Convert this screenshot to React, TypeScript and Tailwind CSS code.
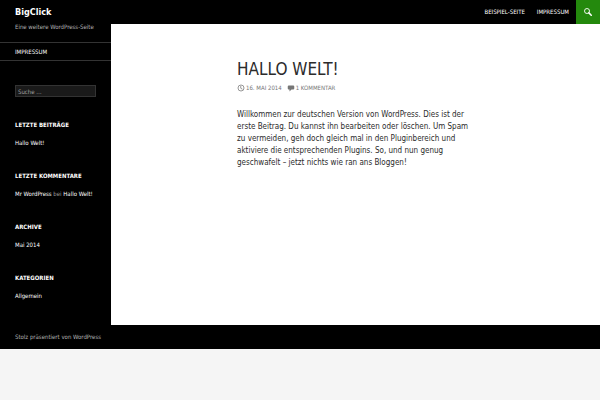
import React, { useState } from 'react'

interface Widget {
    title: string
    content: React.ReactNode
}

const widgets: Widget[] = [
    { title: 'Letzte Beiträge', content: <a href="#welt">Hallo Welt!</a> },
    {
        title: 'Letzte Kommentare',
        content: (
            <>
                <a href="#mr">Mr WordPress</a>
                <span className="text-[#9a9a9a]"> bei </span>
                <a href="#welt">Hallo Welt!</a>
            </>
        ),
    },
    { title: 'Archive', content: <a href="#archive">Mai 2014</a> },
    { title: 'Kategorien', content: <a href="#allgemein">Allgemein</a> },
]

const SearchIcon: React.FC = () => (
    <svg viewBox="0 0 16 16" className="size-2" fill="none" stroke="white">
        <circle cx="6" cy="6" r="5" strokeWidth="1.8" />
        <path d="M9.8 9.8 L14.5 14.5" strokeWidth="3" strokeLinecap="round" />
    </svg>
)

const ClockIcon: React.FC = () => (
    <svg viewBox="0 0 16 16" className="size-2" fill="none" stroke="#767676">
        <circle cx="8" cy="8" r="6" strokeWidth="1.5" />
        <path d="M7.5 4 V8.5 L11 10.5" strokeWidth="1.5" />
    </svg>
)

const CommentIcon: React.FC = () => (
    <svg viewBox="0 0 16 16" className="size-2" fill="#767676">
        <path d="M3.5 3 H12.5 Q14.5 3 14.5 5 V9 Q14.5 11 12.5 11 H9 L5 15 V11 H3.5 Q1.5 11 1.5 9 V5 Q1.5 3 3.5 3 Z" />
    </svg>
)

const App: React.FC = () => {
    const [search, setSearch] = useState('')

    return (
        <div className="min-h-screen bg-[#f5f5f5] font-['DejaVu_Sans_Condensed','DejaVu_Sans',sans-serif] text-[6px] leading-[9px] antialiased">
            <div className="flex bg-black text-white">
                <aside className="w-[111px] shrink-0 pb-px">
                    <div className="px-[15px] pb-[11px]">
                        <h1 className="text-[9px] leading-6 font-bold">
                            <a href="#home">BigClick</a>
                        </h1>
                        <p className="-mt-0.5 whitespace-nowrap text-[#b3b3b3]">
                            Eine weitere WordPress-Seite
                        </p>
                    </div>
                    <nav className="border-y border-[#333333] px-[15px] leading-[17px] uppercase">
                        <a href="#impressum">Impressum</a>
                    </nav>
                    <form
                        className="mt-6 mb-[23px] px-[15px]"
                        onSubmit={(e) => e.preventDefault()}
                    >
                        <input
                            type="search"
                            aria-label="Suche"
                            placeholder="Suche …"
                            value={search}
                            onChange={(e) => setSearch(e.target.value)}
                            className="block h-3 w-full border border-[#333333] bg-[#1a1a1a] px-0.5 text-white placeholder:text-[#a0a0a0]"
                        />
                    </form>
                    {widgets.map((widget) => (
                        <section key={widget.title} className="mb-6 px-[15px]">
                            <h2 className="mb-[9px] font-bold uppercase">
                                {widget.title}
                            </h2>
                            <p className="whitespace-nowrap">
                                {widget.content}
                            </p>
                        </section>
                    ))}
                </aside>
                <div className="flex min-w-0 flex-1 flex-col">
                    <header className="flex h-6 justify-end leading-[23px] uppercase">
                        <nav className="flex gap-3 pr-[7px]">
                            <a href="#beispiel">Beispiel-Seite</a>
                            <a href="#impressum">Impressum</a>
                        </nav>
                        <button
                            type="button"
                            aria-label="Suche"
                            className="flex size-6 items-center justify-center bg-[#24890d]"
                        >
                            <SearchIcon />
                        </button>
                    </header>
                    <main className="flex-1 bg-white pt-9">
                        <article className="mx-auto w-[237px] text-[#2b2b2b]">
                            <h1 className="text-[17px] leading-[18px] uppercase">
                                <a href="#welt">Hallo Welt!</a>
                            </h1>
                            <div className="mt-[5px] flex gap-[5px] text-[#767676] uppercase">
                                <a href="#datum" className="flex items-center gap-px">
                                    <ClockIcon />
                                    16. Mai 2014
                                </a>
                                <a href="#kommentar" className="flex items-center gap-px">
                                    <CommentIcon />1 Kommentar
                                </a>
                            </div>
                            <p className="mt-[17px] text-[8px] leading-3">
                                Willkommen zur deutschen Version von WordPress.
                                Dies ist der erste Beitrag. Du kannst ihn
                                bearbeiten oder löschen. Um Spam zu vermeiden,
                                geh doch gleich mal in den Pluginbereich und
                                aktiviere die entsprechenden Plugins. So, und
                                nun genug geschwafelt – jetzt nichts wie ran ans
                                Bloggen!
                            </p>
                        </article>
                    </main>
                </div>
            </div>
            <footer className="bg-black px-[15px] pt-[7px] pb-2 text-[#b3b3b3]">
                <a href="#wordpress">Stolz präsentiert von WordPress</a>
            </footer>
        </div>
    )
}

export default App
